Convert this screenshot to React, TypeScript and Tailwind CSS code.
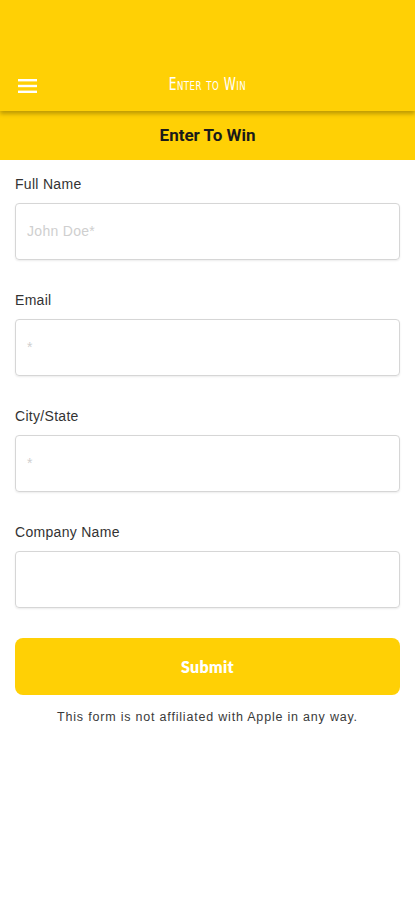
import React from "react";

function Field({ label, placeholder }: { label: string; placeholder?: string }) {
  return (
    <div className="mb-[30px]">
      <div className="text-[14px] leading-[20px] text-[#333] mb-[9px] tracking-[0.3px]">{label}</div>
      <div className="h-[57px] rounded-[4px] border border-[#d6d6d6] shadow-[0_1px_2px_rgba(0,0,0,0.08)] flex items-center px-[11px]">
        <span className="text-[14px] text-[#cfcfcf] tracking-[0.3px]">{placeholder}</span>
      </div>
    </div>
  );
}

export default function App() {
  return (
    <div className="w-[415px] h-[900px] bg-white overflow-hidden" style={{ fontFamily: '"Liberation Sans", Arial, sans-serif' }}>
      <div className="relative z-10 h-[111px] bg-[#ffd005] shadow-[0_3px_4px_rgba(0,0,0,0.25)] flex items-end">
        <div className="h-[52px] w-full flex items-center relative">
          <svg className="absolute left-[18px] top-[20px]" width="19" height="14" viewBox="0 0 19 14">
            <rect x="0" y="0" width="19" height="2.4" fill="#fff" />
            <rect x="0" y="5.8" width="19" height="2.4" fill="#fff" />
            <rect x="0" y="11.6" width="19" height="2.4" fill="#fff" />
          </svg>
          <div
            className="w-full text-center text-white text-[17px] tracking-[0.6px]"
            style={{ fontFamily: '"DejaVu Sans Condensed", "Liberation Sans Narrow", sans-serif', fontVariant: "small-caps", transform: "scaleX(0.8)" }}
          >
            Enter to Win
          </div>
        </div>
      </div>
      <div className="h-[49px] bg-[#ffd005] flex items-center justify-center">
        <span className="text-[17px] font-bold text-[#1a1a1a]" style={{ fontFamily: '"Roboto", "Liberation Sans", sans-serif' }}>
          Enter To Win
        </span>
      </div>
      <div className="px-[15px] pt-[14px]">
        <Field label="Full Name" placeholder="John Doe*" />
        <Field label="Email" placeholder="*" />
        <Field label="City/State" placeholder="*" />
        <Field label="Company Name" placeholder="" />
        <div className="mt-[1px] h-[57px] rounded-[8px] bg-[#ffd005] flex items-center justify-center">
          <span className="text-white font-extrabold text-[16px] tracking-[0.3px]" style={{ fontFamily: '"Lato", "Liberation Sans", sans-serif' }}>
            Submit
          </span>
        </div>
        <div className="mt-[13px] text-center text-[12.5px] text-[#3a3a3a] tracking-[0.8px]">This form is not affiliated with Apple in any way.</div>
      </div>
    </div>
  );
}
